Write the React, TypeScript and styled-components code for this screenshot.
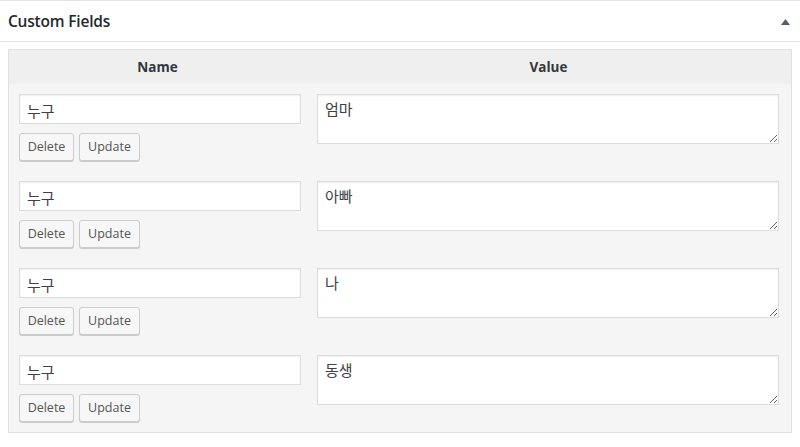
import React from "react";
import styled, { createGlobalStyle } from "styled-components";

const Global = createGlobalStyle`
  html, body { margin: 0; padding: 0; background: #fff; }
  body { font-family: "Open Sans", "Noto Sans CJK KR", sans-serif; color: #32373c; }
`;

const Box = styled.div`
  width: 800px;
  height: 447px;
  border-top: 1px solid #e5e5e5;
  box-sizing: border-box;
  background: #fff;
`;

const Header = styled.div`
  height: 40px;
  border-bottom: 1px solid #e5e5e5;
  display: flex;
  align-items: center;
  justify-content: space-between;
  padding: 0 10px 0 8px;
`;

const Title = styled.h2`
  margin: 0;
  font-family: "Open Sans", sans-serif;
  font-size: 15.5px;
  font-weight: 600;
  color: #23282d;
  letter-spacing: -0.2px;
`;

const Toggle = styled.svg`
  width: 9px;
  height: 6px;
  margin-top: 1px;
`;

const Inside = styled.div`
  padding: 7px 8px 0 8px;
`;

const Table = styled.div`
  border: 1px solid #e1e1e1;
  background: #f5f5f5;
  display: grid;
  grid-template-columns: 297px 1fr;
`;

const HeadCell = styled.div`
  height: 33px;
  background: #efefef;
  display: flex;
  align-items: center;
  justify-content: center;
  font-family: "Open Sans", sans-serif;
  font-weight: 700;
  font-size: 13.5px;
  color: #32373c;
  border-bottom: 1px solid #f1f1f1;
`;

const NameCell = styled.div`
  padding: 10px 5px 10px 10px;
  display: flex;
  flex-direction: column;
  gap: 9px;
`;

const ValueCell = styled.div`
  padding: 10px 12px 10px 11px;
`;

const TextInput = styled.input`
  box-sizing: border-box;
  width: 100%;
  height: 30px;
  margin: 0;
  border: 1px solid #ddd;
  box-shadow: inset 0 1px 2px rgba(0, 0, 0, 0.07);
  background: #fff;
  padding: 2px 7px 0;
  font-family: "Noto Sans CJK KR", sans-serif;
  font-size: 15px;
  color: #3c4146;
  outline: none;
`;

const TextArea = styled.textarea`
  box-sizing: border-box;
  display: block;
  width: 100%;
  height: 50px;
  margin: 0;
  border: 1px solid #ddd;
  box-shadow: inset 0 1px 2px rgba(0, 0, 0, 0.07);
  background: #fff;
  padding: 4px 7px;
  font-family: "Noto Sans CJK KR", sans-serif;
  font-size: 15px;
  line-height: 20px;
  color: #3c4146;
  resize: vertical;
  outline: none;
`;

const Buttons = styled.div`
  display: flex;
  gap: 5px;
`;

const Button = styled.button<{ $w: number }>`
  box-sizing: border-box;
  width: ${(p) => p.$w}px;
  height: 28px;
  margin: 0;
  padding: 0 0 1px;
  border: 1px solid #ccc;
  border-radius: 3px;
  background: #f7f7f7;
  box-shadow: 0 1px 0 #ccc;
  font-family: "Open Sans", sans-serif;
  font-size: 12.5px;
  color: #555;
  cursor: pointer;
`;

const rows = ["엄마", "아빠", "나", "동생"];

export default function App() {
  return (
    <>
      <Global />
      <Box>
        <Header>
          <Title>Custom Fields</Title>
          <Toggle viewBox="0 0 9 6">
            <polygon points="4.5,0 9,6 0,6" fill="#555d66" />
          </Toggle>
        </Header>
        <Inside>
          <Table>
            <HeadCell>Name</HeadCell>
            <HeadCell>Value</HeadCell>
            {rows.map((v, i) => (
              <React.Fragment key={i}>
                <NameCell>
                  <TextInput defaultValue="누구" />
                  <Buttons>
                    <Button $w={55}>Delete</Button>
                    <Button $w={61}>Update</Button>
                  </Buttons>
                </NameCell>
                <ValueCell>
                  <TextArea defaultValue={v} />
                </ValueCell>
              </React.Fragment>
            ))}
          </Table>
        </Inside>
      </Box>
    </>
  );
}
